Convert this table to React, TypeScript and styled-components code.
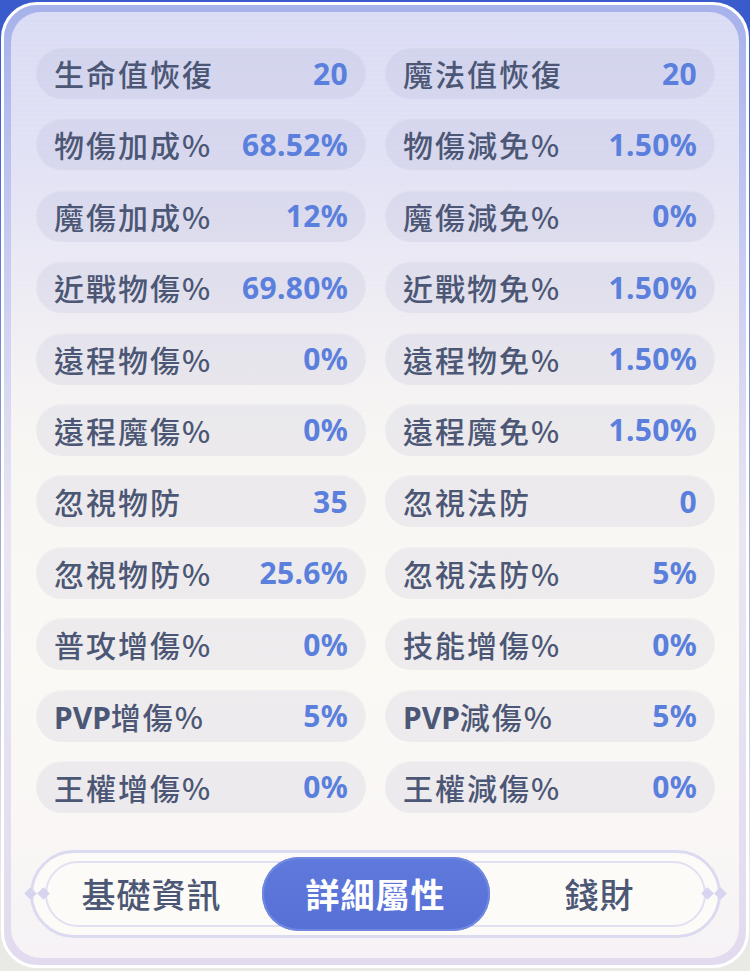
import React from 'react';
import styled, { createGlobalStyle } from 'styled-components';

const Global = createGlobalStyle`
  html, body { margin: 0; padding: 0; }
  body {
    width: 750px;
    height: 971px;
    overflow: hidden;
    background: linear-gradient(180deg, #3a5bcb 0px, #3a5bcb 90px, #e9e9e6 880px);
    font-family: "Noto Sans CJK TC", "Noto Sans", sans-serif;
  }
`;

const Page = styled.div`
  width: 750px;
  height: 971px;
  box-sizing: border-box;
  padding: 2px 1px 3px;
  display: flex;
`;

const Card = styled.div`
  flex: 1;
  display: flex;
  box-sizing: border-box;
  border: 3px solid #ffffff;
  border-radius: 36px;
  padding: 7px;
  background: linear-gradient(180deg, #a6b2ea 0%, #c6cbf0 25%, #e9e6f3 55%, #e2dbef 100%);
`;

const Panel = styled.div`
  flex: 1;
  display: flex;
  flex-direction: column;
  border-radius: 30px;
  padding: 35px 24px 20px 25px;
  background:
    repeating-linear-gradient(180deg, rgba(255,255,255,0.05) 0px, rgba(255,255,255,0.05) 2px, rgba(0,0,0,0) 2px, rgba(0,0,0,0) 5px),
    linear-gradient(180deg, #dadcf6 0%, #e3e3f5 18%, #efedf3 32%, #f8f6f3 45%, #fbf9f4 70%, #f9f6f5 88%, #f6f2f6 100%);
`;

const Grid = styled.div`
  display: grid;
  grid-template-columns: 330px 330px;
  column-gap: 19px;
  row-gap: 19.4px;
`;

const Pill = styled.div`
  height: 52px;
  border-radius: 26px;
  background: rgba(120, 120, 170, 0.095);
  box-shadow: inset 0 1px 2px rgba(255, 255, 255, 0.35);
  display: flex;
  align-items: center;
  justify-content: space-between;
  padding: 0 18px 0 18px;
`;

const Label = styled.span`
  font-size: 30px;
  font-weight: 500;
  letter-spacing: 2px;
  color: #4c5775;
  white-space: nowrap;
`;

const Latin = styled.span`
  font-family: "Noto Sans", sans-serif;
  font-weight: 700;
  letter-spacing: 0;
`;

const Value = styled.span`
  font-size: 30px;
  font-weight: 700;
  color: #5a7fdc;
  font-family: "Noto Sans", "Noto Sans CJK TC", sans-serif;
  letter-spacing: 0.3px;
`;

const TabBar = styled.div`
  position: relative;
  margin: 37px -6px 0;
  height: 88px;
  box-sizing: border-box;
  border: 3px solid #dcdaf0;
  border-radius: 46px;
  background: #fcfbf7;
  display: grid;
  grid-template-columns: repeat(3, 224px);
  justify-content: center;
  align-items: center;
  &::before {
    content: "";
    position: absolute;
    inset: 8px 12px;
    border: 2px solid #e1dff2;
    border-radius: 36px;
    pointer-events: none;
  }
`;

const Diamond = styled.span<{ $side: 'left' | 'right'; $offset: number }>`
  position: absolute;
  top: 50%;
  ${(p) => p.$side}: ${(p) => p.$offset}px;
  width: 9px;
  height: 9px;
  margin-top: -5px;
  background: #d6d4ee;
  transform: rotate(45deg);
`;

const Tab = styled.div<{ $active?: boolean }>`
  position: relative;
  z-index: 1;
  height: 74px;
  margin: 0 -2px;
  border-radius: 37px;
  display: flex;
  align-items: center;
  justify-content: center;
  font-size: 34px;
  font-weight: ${(p) => (p.$active ? 700 : 500)};
  letter-spacing: 1px;
  color: ${(p) => (p.$active ? '#ffffff' : '#4c5775')};
  background: ${(p) => (p.$active ? 'linear-gradient(180deg, #6079dc 0%, #5670d6 100%)' : 'transparent')};
  box-shadow: ${(p) => (p.$active ? 'inset 0 0 0 2px #7088e2' : 'none')};
`;

const rows: [string, string, string, string][] = [
  ['生命值恢復', '20', '魔法值恢復', '20'],
  ['物傷加成%', '68.52%', '物傷減免%', '1.50%'],
  ['魔傷加成%', '12%', '魔傷減免%', '0%'],
  ['近戰物傷%', '69.80%', '近戰物免%', '1.50%'],
  ['遠程物傷%', '0%', '遠程物免%', '1.50%'],
  ['遠程魔傷%', '0%', '遠程魔免%', '1.50%'],
  ['忽視物防', '35', '忽視法防', '0'],
  ['忽視物防%', '25.6%', '忽視法防%', '5%'],
  ['普攻增傷%', '0%', '技能增傷%', '0%'],
  ['PVP增傷%', '5%', 'PVP減傷%', '5%'],
  ['王權增傷%', '0%', '王權減傷%', '0%'],
];

function renderLabel(text: string) {
  if (text.startsWith('PVP')) {
    return (
      <>
        <Latin>PVP</Latin>
        {text.slice(3)}
      </>
    );
  }
  return text;
}

export default function App() {
  return (
    <>
      <Global />
      <Page>
        <Card>
          <Panel>
            <Grid>
              {rows.map((r, i) => (
                <React.Fragment key={i}>
                  <Pill>
                    <Label>{renderLabel(r[0])}</Label>
                    <Value>{r[1]}</Value>
                  </Pill>
                  <Pill>
                    <Label>{renderLabel(r[2])}</Label>
                    <Value>{r[3]}</Value>
                  </Pill>
                </React.Fragment>
              ))}
            </Grid>
            <TabBar>
              <Diamond $side="left" $offset={-7} />
              <Diamond $side="left" $offset={6} />
              <Diamond $side="right" $offset={-7} />
              <Diamond $side="right" $offset={6} />
              <Tab>基礎資訊</Tab>
              <Tab $active>詳細屬性</Tab>
              <Tab>錢財</Tab>
            </TabBar>
          </Panel>
        </Card>
      </Page>
    </>
  );
}
